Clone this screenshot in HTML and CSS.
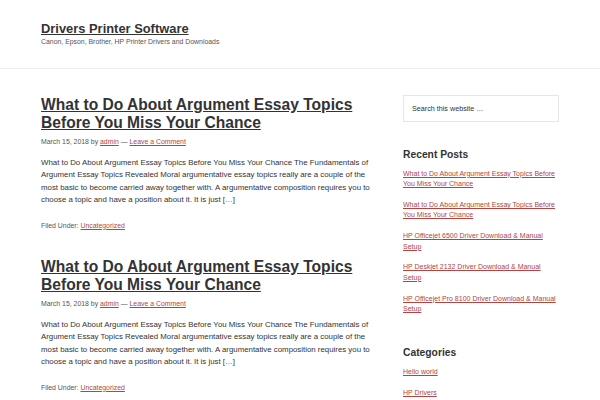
FILE: index.html
```html
<!DOCTYPE html>
<html lang="en">
<head>
<meta charset="utf-8">
<title>Drivers Printer Software</title>
<link rel="stylesheet" href="styles.css">
</head>
<body>
<header class="site-header">
  <div class="wrap">
    <p class="site-title"><a href="#">Drivers Printer Software</a></p>
    <p class="site-description">Canon, Epson, Brother, HP Printer Drivers and Downloads</p>
  </div>
</header>
<div class="site-inner">
  <main class="content">
    <article class="entry">
      <h2 class="entry-title"><a href="#">What to Do About Argument Essay Topics Before You Miss Your Chance</a></h2>
      <p class="entry-meta">March 15, 2018 by <a href="#">admin</a> — <a href="#">Leave a Comment</a></p>
      <p class="entry-content">What to Do About Argument Essay Topics Before You Miss Your Chance The Fundamentals of Argument Essay Topics Revealed Moral argumentative essay topics really are a couple of the most basic to become carried away together with. A argumentative composition requires you to choose a topic and have a position about it. It is just […]</p>
      <p class="entry-footer">Filed Under: <a href="#">Uncategorized</a></p>
    </article>
    <article class="entry">
      <h2 class="entry-title"><a href="#">What to Do About Argument Essay Topics Before You Miss Your Chance</a></h2>
      <p class="entry-meta">March 15, 2018 by <a href="#">admin</a> — <a href="#">Leave a Comment</a></p>
      <p class="entry-content">What to Do About Argument Essay Topics Before You Miss Your Chance The Fundamentals of Argument Essay Topics Revealed Moral argumentative essay topics really are a couple of the most basic to become carried away together with. A argumentative composition requires you to choose a topic and have a position about it. It is just […]</p>
      <p class="entry-footer">Filed Under: <a href="#">Uncategorized</a></p>
    </article>
  </main>
  <aside class="sidebar">
    <div class="search-form">
      <span class="search-input">Search this website …</span>
    </div>
    <section class="widget">
      <h4 class="widget-title">Recent Posts</h4>
      <ul>
        <li><a href="#">What to Do About Argument Essay Topics Before You Miss Your Chance</a></li>
        <li><a href="#">What to Do About Argument Essay Topics Before You Miss Your Chance</a></li>
        <li><a href="#">HP Officejet 6500 Driver Download &amp; Manual Setup</a></li>
        <li><a href="#">HP Deskjet 2132 Driver Download &amp; Manual Setup</a></li>
        <li><a href="#">HP Officejet Pro 8100 Driver Download &amp; Manual Setup</a></li>
      </ul>
    </section>
    <section class="widget">
      <h4 class="widget-title">Categories</h4>
      <ul>
        <li><a href="#">Hello world</a></li>
        <li><a href="#">HP Drivers</a></li>
      </ul>
    </section>
  </aside>
</div>
</body>
</html>
```
FILE: styles.css
```css
* { box-sizing: border-box; }
html, body { margin: 0; padding: 0; }
body {
  background: #fff;
  color: #333;
  font-family: "Liberation Sans", Arial, sans-serif;
  overflow: hidden;
}
p, h2, h4, ul { margin: 0; padding: 0; }
a { color: #b4443f; }

.site-header {
  height: 69px;
  border-bottom: 1px solid #eee;
}
.site-header .wrap {
  padding: 21px 0 0 41px;
}
.site-title {
  font-size: 12.9px;
  font-weight: 700;
  line-height: 16px;
}
.site-title a { color: #333; }
.site-description {
  font-size: 6.9px;
  line-height: 10px;
  color: #555;
}

.site-inner {
  display: flex;
  padding-left: 41px;
  gap: 26px;
}
.content {
  width: 336px;
  padding-top: 27px;
}
.entry { margin-bottom: 27.5px; }
.entry-title {
  font-size: 15.6px;
  line-height: 18px;
  font-weight: 700;
}
.entry-title a { color: #333; }
.entry-meta {
  font-size: 6.9px;
  line-height: 11px;
  color: #555;
  margin-top: 3.5px;
}
.entry-content {
  font-size: 7.85px;
  line-height: 12.5px;
  margin-top: 10.25px;
}
.entry-footer {
  font-size: 6.9px;
  line-height: 11px;
  color: #555;
  margin-top: 12.75px;
}

.sidebar {
  width: 156px;
  padding-top: 26px;
}
.search-form {
  height: 27px;
  border: 1px solid #e6e6e6;
  display: flex;
  align-items: center;
  padding-left: 8px;
}
.search-input {
  font-size: 7.2px;
  color: #333;
}
.widget { margin-top: 25.5px; }
.widget + .widget { margin-top: 31.5px; }
.widget-title {
  font-size: 10.3px;
  line-height: 13px;
  font-weight: 700;
  margin-bottom: 8.25px;
}
.widget ul { list-style: none; width: 155px; }
.widget li {
  font-size: 7px;
  line-height: 10.4px;
  margin-bottom: 10.4px;
}
```
